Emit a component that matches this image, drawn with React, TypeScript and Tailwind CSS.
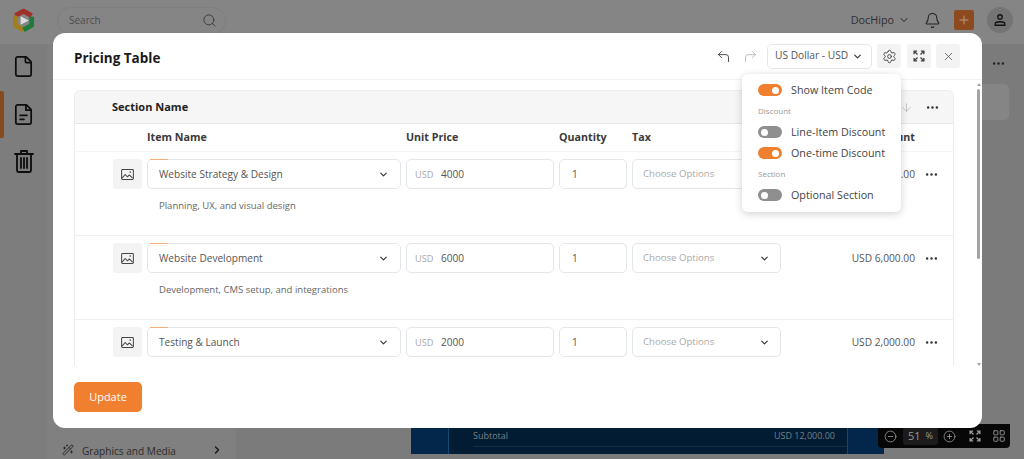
import { Bell, ChevronDown, ChevronRight, CirclePlus, CircleMinus, CornerUpLeft, CornerUpRight, File, LayoutGrid, MoreHorizontal, Plus, Search, Settings, X, ArrowDown, WandSparkles } from "lucide-react";

const ExpandIcon = ({ className = "" }: { className?: string }) => (
  <svg viewBox="0 0 16 16" className={className} fill="none" stroke="currentColor" strokeWidth="1.8">
    <path d="M1.500 5.500v-4h4M1.500 1.500l4.500 4.500M14.500 5.500v-4h-4M14.500 1.500l-4.500 4.500M1.500 10.500v4h4M1.500 14.500l4.500-4.500M14.500 10.500v4h-4M14.500 14.500l-4.500-4.500" />
  </svg>
);

const TrashIcon = ({ className = "" }: { className?: string }) => (
  <svg viewBox="0 0 20 24" className={className} fill="none" stroke="currentColor" strokeWidth="1.8" strokeLinecap="round" strokeLinejoin="round">
    <path d="M1 5h18M7 5V2h6v3M3 5v16.500a1.500 1.500 0 0 0 1.500 1.500h11a1.500 1.500 0 0 0 1.500-1.500V5M7 9v10M10 9v10M13 9v10" />
  </svg>
);

const DocLinesIcon = ({ className = "" }: { className?: string }) => (
  <svg viewBox="0 0 24 24" className={className} fill="none" stroke="currentColor" strokeWidth="1.8" strokeLinecap="round" strokeLinejoin="round">
    <path d="M15 2H6a2 2 0 0 0-2 2v16a2 2 0 0 0 2 2h12a2 2 0 0 0 2-2V7z" />
    <path d="M14.500 2v5.500H20M8.500 13h7M8.500 17h4" />
  </svg>
);

const PictureIcon = ({ className = "" }: { className?: string }) => (
  <svg viewBox="0 0 14 12" className={className} fill="none" stroke="currentColor" strokeWidth="1.1" strokeLinejoin="round">
    <rect x="0.600" y="0.600" width="12.800" height="10.800" rx="1" />
    <path d="M1 10l3.500-4 2.500 2.500 2-2 3.500 3.500" />
    <circle cx="10" cy="3.300" r="0.900" fill="currentColor" stroke="none" />
  </svg>
);

const Toggle = ({ on }: { on: boolean }) => (
  <span className={`flex h-3 w-[24px] shrink-0 items-center rounded-full px-[3px] ${on ? "justify-end bg-[#f08030]" : "justify-start bg-[#8f8f8f]"}`}>
    <span className="size-[7px] rounded-full bg-white" />
  </span>
);

const rows = [
  { name: "Website Strategy & Design", desc: "Planning, UX, and visual design", price: "4000", total: "USD 4,000.00" },
  { name: "Website Development", desc: "Development, CMS setup, and integrations", price: "6000", total: "USD 6,000.00" },
  { name: "Testing & Launch", desc: "", price: "2000", total: "USD 2,000.00" },
];

const box = "flex h-[30px] items-center rounded-[5px] border border-[#e3e7ec] bg-white";

function Row({ r }: { r: (typeof rows)[number] }) {
  return (
    <div className="h-[84px] border-b border-[#f0f0f0] pl-[38px] pt-[7px]">
      <div className="flex items-center gap-[5px]">
        <div className="flex h-[30px] w-[29px] items-center justify-center rounded-[3px] bg-[#f3f3f3]">
          <PictureIcon className="h-[11px] w-[13px] text-[#444]" />
        </div>
        <div className={`${box} relative w-[254px] justify-between pl-[11px] pr-[11px] pt-px text-[10.1px] text-[#555]`}>
          <span className="absolute -top-px left-[2px] h-px w-[18px] bg-[#f6b07e]" />
          <span>{r.name}</span>
          <ChevronDown className="size-[11px] text-[#333]" strokeWidth={2.5} />
        </div>
        <div className={`${box} w-[148px] pl-[8px] pt-px text-[10.1px]`}>
          <span className="w-[26px] text-[9.2px] text-[#aaa]">USD</span>
          <span className="text-[#555]">{r.price}</span>
        </div>
        <div className={`${box} w-[68px] pl-[12px] pt-px text-[10.1px] text-[#555]`}>1</div>
        <div className={`${box} w-[149px] justify-between pl-[10px] pr-[10px] pt-px text-[9.6px] text-[#aaa]`}>
          <span>Choose Options</span>
          <ChevronDown className="size-[11px] text-[#333]" strokeWidth={2.5} />
        </div>
        <div className="w-[129px] pt-px text-right text-[10.2px] text-[#555]">{r.total}</div>
        <MoreHorizontal className="ml-[4px] size-[15px] text-[#333]" strokeWidth={2} />
      </div>
      {r.desc && <p className="ml-[46px] mt-[9px] text-[9.500px] leading-[16px] text-[#666]">{r.desc}</p>}
    </div>
  );
}

export default function App() {
  return (
    <div className="relative flex h-[459px] w-[1024px] flex-col overflow-hidden bg-[#7b7b7b] font-['Open_Sans',sans-serif]">
      <header className="flex h-[44px] items-center bg-[#858585] pb-[4px] pl-[12px] pr-[11px]">
        <svg viewBox="0 0 24 26" className="h-[25px] w-[23px]" fill="none" strokeWidth="5" strokeLinejoin="round">
          <path d="M3.500 8 12 3.300 20.500 8" stroke="#a0302a" />
          <path d="M3.500 8v10L12 22.700" stroke="#a07f1c" />
          <path d="M20.500 9v9L12 22.700" stroke="#1f7a3c" />
          <path d="M9 8.500 17.500 13 9 17.500z" fill="#dcdcdc" stroke="none" />
        </svg>
        <div className="ml-[22px] flex h-[27px] w-[169px] items-center justify-between rounded-full border border-[#7e7e7e] pl-[11px] pr-[8px] text-[10px] text-[#4c4c4c]">
          <span>Search</span>
          <Search className="size-[15px] text-[#3a3a3a]" strokeWidth={1.5} />
        </div>
        <div className="ml-auto flex items-center">
          <span className="text-[10.800px] text-[#2f2f2f]">DocHipo</span>
          <ChevronDown className="ml-[4px] size-[12px] text-[#222]" strokeWidth={2} />
          <Bell className="ml-[14px] size-[17px] text-[#222]" strokeWidth={1.5} />
          <span className="ml-[13px] flex size-[20px] items-center justify-center rounded-[2px] bg-[#8c4a1e]">
            <Plus className="size-[14px] text-[#c0a593]" strokeWidth={1.5} />
          </span>
          <span className="ml-[13px] flex size-[26px] items-center justify-center rounded-full bg-[#747474]">
            <svg viewBox="0 0 16 16" className="size-[14px]" fill="none" stroke="#111" strokeWidth="1.5">
              <circle cx="8" cy="4.500" r="2.500" />
              <path d="M2.500 14v-1.500c0-1.500 2-2.500 5.500-2.500s5.500 1 5.500 2.500V14z" />
            </svg>
          </span>
        </div>
      </header>

      <div className="flex min-h-0 flex-1">
        <aside className="flex w-[47px] flex-col items-center bg-[#7d7d7d] pt-[11px]">
          <File className="size-[23px] text-[#0d0d0d]" strokeWidth={1.8} />
          <div className="relative mt-[13px] flex h-[47px] w-full items-center justify-center">
            <span className="absolute left-0 top-0 h-full w-[4px] rounded-r-[2px] bg-[#854a1d]" />
            <DocLinesIcon className="size-[23px] text-[#0d0d0d]" />
          </div>
          <TrashIcon className="mt-[11px] h-[24px] w-[20px] text-[#0d0d0d]" />
        </aside>
        <nav className="flex w-[189px] flex-col justify-end bg-[#808080] pb-[1px] pl-[15px] pr-[13px]">
          <div className="flex h-[14px] items-start text-[10.100px] leading-[14px] text-[#2c2c2c]">
            <WandSparkles className="mr-[8px] size-[12px]" />
            <span>Graphics and Media</span>
            <ChevronRight className="ml-auto size-[12px] text-[#111]" strokeWidth={2.5} />
          </div>
        </nav>
        <main className="flex min-w-0 flex-1 flex-col bg-[#7b7b7b] pl-[175px] pr-[140px] pb-[5px]">
          <div className="mt-auto flex h-[27px] w-[473px] bg-[#02274a]">
            <div className="ml-[37px] h-full w-[400px] border-x border-[#0e4a72] bg-[#011c33] pl-[24px] text-[9px]">
              <div className="flex h-[20px] items-center justify-between border-b border-[#12303f] pb-[2px] pr-[12px] text-[#77828b]">
                <span>Subtotal</span>
                <span>USD 12,000.00</span>
              </div>
            </div>
          </div>
        </main>
      </div>

      {/* Background page dots and card, beside the modal */}
      <div className="absolute right-[15px] top-[84px] h-[36px] w-[30px] rounded-r-[5px] bg-[#858585]" />
      <MoreHorizontal className="absolute left-[991px] top-[56px] size-[15px] text-[#222]" strokeWidth={2} />

      {/* Zoom toolbar */}
      <div className="absolute left-[878px] top-[424px] flex h-[24px] w-[132px] items-center rounded-b-[4px] bg-[#070707] pl-[6px] text-[#9a9a9a]">
        <CircleMinus className="size-[13px]" strokeWidth={1.5} />
        <span className="ml-[6px] flex h-[18px] w-[35px] items-center justify-center gap-[5px] rounded-[3px] bg-[#1c1c1c] text-[11px]">
          51 <span className="text-[9px]">%</span>
        </span>
        <CirclePlus className="ml-[5px] size-[13px]" strokeWidth={1.5} />
        <ExpandIcon className="ml-[13px] size-[12px]" />
        <LayoutGrid className="ml-[11px] size-[14px]" strokeWidth={1.5} />
      </div>

      {/* Modal */}
      <div className="absolute left-[53px] top-[33px] flex h-[395px] w-[929px] flex-col rounded-[12px] bg-white">
        <div className="flex h-[47px] shrink-0 items-center border-b border-[#f3f3f3] pl-[21px] pr-[22px]">
          <h2 className="mt-[4px] text-[13.500px] font-bold text-[#1a1a1a]">Pricing Table</h2>
          <CornerUpLeft className="ml-auto size-[15px] text-[#444]" strokeWidth={1.5} />
          <CornerUpRight className="ml-[12px] size-[15px] text-[#bbb]" strokeWidth={1.5} />
          <div className="ml-[9px] flex h-[25px] w-[105px] items-center justify-between rounded-[5px] border border-[#e3e7ec] pl-[7px] pr-[8px] text-[10.200px] whitespace-nowrap text-[#555]">
            <span>US Dollar - USD</span>
            <ChevronDown className="size-[11px] shrink-0 text-[#333]" strokeWidth={2.5} />
          </div>
          <button className="ml-[5px] flex size-[24px] items-center justify-center rounded-[3px] bg-[#f3f3f3]">
            <Settings className="size-[15px] text-[#444]" strokeWidth={1.5} />
          </button>
          <button className="ml-[6px] flex size-[24px] items-center justify-center rounded-[3px] bg-[#f3f3f3]">
            <ExpandIcon className="size-[12px] text-[#444]" />
          </button>
          <button className="ml-[5px] flex size-[24px] items-center justify-center rounded-[3px] bg-[#f3f3f3]">
            <X className="size-[13px] text-[#555]" strokeWidth={1.5} />
          </button>
        </div>

        <div className="relative h-[286px] flex-none overflow-hidden pl-[21px] pr-[28px] pt-[10px]">
          <div className="rounded-t-[6px] border border-b-0 border-[#ececec]">
            <div className="flex h-[33px] items-center justify-between rounded-t-[6px] border-b border-[#e6e6e6] bg-[#f6f6f6] pl-[37px] pr-[13px]">
              <span className="text-[11px] font-bold text-[#222]">Section Name</span>
              <span className="flex items-center gap-[12px]">
                <ArrowDown className="size-[13px] text-[#bbb]" strokeWidth={1.5} />
                <MoreHorizontal className="size-[15px] text-[#333]" strokeWidth={2} />
              </span>
            </div>
            <div className="flex h-[28px] items-center border-b border-[#f5f5f5] pl-[72px] text-[10.700px] font-bold text-[#3a3a3a]">
              <span className="w-[259px]">Item Name</span>
              <span className="w-[153px]">Unit Price</span>
              <span className="w-[73px]">Quantity</span>
              <span className="w-[215px]">Tax</span>
              <span className="w-[68px] text-right">Amount</span>
            </div>
            {rows.map((r) => (
              <Row key={r.name} r={r} />
            ))}
          </div>
          {/* Scrollbar */}
          <div className="absolute right-[2px] top-[9px] h-[170px] w-[3px] rounded-full bg-[#a3a3a3]" />
          <span className="absolute right-[1px] top-[3px] h-0 w-0 border-x-[2.5px] border-b-[3px] border-x-transparent border-b-[#a3a3a3]" />
          <span className="absolute bottom-0 right-[1px] h-0 w-0 border-x-[2.5px] border-t-[3px] border-x-transparent border-t-[#a3a3a3]" />
        </div>

        <div className="flex flex-1 items-start pl-[21px] pt-[16px]">
          <button className="h-[30px] w-[68px] rounded-[5px] bg-[#f08030] text-[11px] font-medium text-white">Update</button>
        </div>

        {/* Settings popover */}
        <div className="absolute left-[689px] top-[41px] w-[159px] rounded-[6px] bg-white pb-[10px] pl-[16px] pt-[9px] text-[10.750px] text-[#444] shadow-[0_2px_8px_rgba(0,0,0,0.18)]">
          <label className="flex h-[14px] items-center gap-[9px]"><Toggle on /><span>Show Item Code</span></label>
          <p className="mt-[7px] h-[14px] text-[8px] leading-[14px] text-[#999]">Discount</p>
          <label className="mt-[7px] flex h-[14px] items-center gap-[9px]"><Toggle on={false} /><span>Line-Item Discount</span></label>
          <label className="mt-[7px] flex h-[14px] items-center gap-[9px]"><Toggle on /><span>One-time Discount</span></label>
          <p className="mt-[7px] h-[14px] text-[8px] leading-[14px] text-[#999]">Section</p>
          <label className="mt-[7px] flex h-[14px] items-center gap-[9px]"><Toggle on={false} /><span>Optional Section</span></label>
        </div>
      </div>
    </div>
  );
}
